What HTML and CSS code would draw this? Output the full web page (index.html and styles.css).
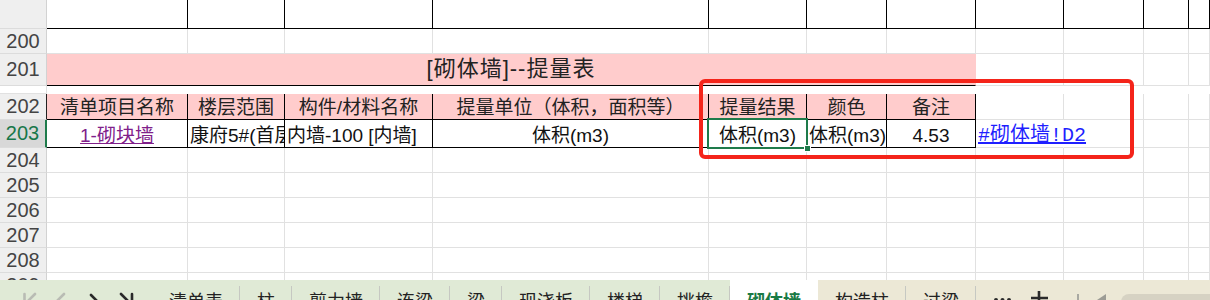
FILE: index.html
```html
<!DOCTYPE html>
<html lang="zh-CN">

<head>
  <meta charset="UTF-8" />
  <title>砌体墙 - 提量表</title>
  <link rel="stylesheet" href="styles.css">
</head>

<body>
  <div class="sheet">
    <!-- 上一张表的最后一行 -->
    <div class="row r-top">
      <div class="rh"></div>
      <div class="c"></div><div class="c"></div><div class="c"></div><div class="c"></div>
      <div class="c"></div><div class="c"></div><div class="c"></div><div class="c"></div>
      <div class="c"></div><div class="c"></div><div class="c"></div>
    </div>
    <div class="row">
      <div class="rh">200</div>
      <div class="c"></div><div class="c"></div><div class="c"></div><div class="c"></div>
      <div class="c"></div><div class="c"></div><div class="c"></div><div class="c"></div>
      <div class="c"></div><div class="c"></div><div class="c"></div>
    </div>
    <!-- 标题 -->
    <div class="row r-title">
      <div class="rh">201</div>
      <div class="c title">[砌体墙]--提量表</div>
      <div class="c"></div><div class="c"></div><div class="c"></div><div class="c"></div><div class="c"></div>
    </div>
    <!-- 表头 -->
    <div class="row r-head">
      <div class="rh">202</div>
      <div class="c hd">清单项目名称</div>
      <div class="c hd">楼层范围</div>
      <div class="c hd">构件/材料名称</div>
      <div class="c hd">提量单位（体积，面积等）</div>
      <div class="c hd">提量结果</div>
      <div class="c hd">颜色</div>
      <div class="c hd">备注</div>
      <div class="c"></div><div class="c"></div><div class="c"></div><div class="c"></div>
    </div>
    <!-- 数据 -->
    <div class="row r-data">
      <div class="rh cur">203</div>
      <div class="c bd center"><span class="visited">1-砌块墙</span></div>
      <div class="c bd">康府5#(首层)</div>
      <div class="c bd">内墙-100 [内墙]</div>
      <div class="c bd center">体积(m3)</div>
      <div class="c bd center act">体积(m3)<span class="selbox"></span><span class="handle"></span></div>
      <div class="c bd">体积(m3)</div>
      <div class="c bd center">4.53</div>
      <div class="c spill"><span class="link">#砌体墙!D2</span></div>
      <div class="c"></div><div class="c"></div><div class="c"></div>
    </div>
    <div class="row">
      <div class="rh">204</div>
      <div class="c"></div><div class="c"></div><div class="c"></div><div class="c"></div>
      <div class="c"></div><div class="c"></div><div class="c"></div><div class="c"></div>
      <div class="c"></div><div class="c"></div><div class="c"></div>
    </div>
    <div class="row">
      <div class="rh">205</div>
      <div class="c"></div><div class="c"></div><div class="c"></div><div class="c"></div>
      <div class="c"></div><div class="c"></div><div class="c"></div><div class="c"></div>
      <div class="c"></div><div class="c"></div><div class="c"></div>
    </div>
    <div class="row">
      <div class="rh">206</div>
      <div class="c"></div><div class="c"></div><div class="c"></div><div class="c"></div>
      <div class="c"></div><div class="c"></div><div class="c"></div><div class="c"></div>
      <div class="c"></div><div class="c"></div><div class="c"></div>
    </div>
    <div class="row">
      <div class="rh">207</div>
      <div class="c"></div><div class="c"></div><div class="c"></div><div class="c"></div>
      <div class="c"></div><div class="c"></div><div class="c"></div><div class="c"></div>
      <div class="c"></div><div class="c"></div><div class="c"></div>
    </div>
    <div class="row">
      <div class="rh">208</div>
      <div class="c"></div><div class="c"></div><div class="c"></div><div class="c"></div>
      <div class="c"></div><div class="c"></div><div class="c"></div><div class="c"></div>
      <div class="c"></div><div class="c"></div><div class="c"></div>
    </div>
    <div class="row">
      <div class="rh">209</div>
      <div class="c"></div><div class="c"></div><div class="c"></div><div class="c"></div>
      <div class="c"></div><div class="c"></div><div class="c"></div><div class="c"></div>
      <div class="c"></div><div class="c"></div><div class="c"></div>
    </div>

    <!-- 标注框 -->
    <div class="annot"></div>
  </div>

  <!-- 工作表标签 -->
  <div class="tabs">
    <div class="nav">
      <svg width="152" height="20" viewBox="0 0 152 20">
        <g fill="none" stroke-width="2.6" stroke-linecap="round" stroke-linejoin="round">
          <path d="M24.5 14v12M35 14l-7 7 7 7" stroke="#b9bcb4" />
          <path d="M64 14l-7 7 7 7" stroke="#b9bcb4" />
          <path d="M91 15l7 7-7 7" stroke="#2a2a2a" />
          <path d="M121 14l7 7-7 7M132 14v12" stroke="#2a2a2a" />
        </g>
      </svg>
    </div>
    <div class="tab">清单表</div>
    <div class="tab">柱</div>
    <div class="tab">剪力墙</div>
    <div class="tab">连梁</div>
    <div class="tab">梁</div>
    <div class="tab">现浇板</div>
    <div class="tab">楼梯</div>
    <div class="tab">挑檐</div>
    <div class="tab active">砌体墙</div>
    <div class="tab after">构造柱</div>
    <div class="tab after">过梁</div>
    <div class="tail">
      <svg width="240" height="20" viewBox="0 0 240 20">
        <circle cx="20" cy="20" r="2" fill="#2a2a2a" />
        <circle cx="26.5" cy="20" r="2" fill="#2a2a2a" />
        <circle cx="33" cy="20" r="2" fill="#2a2a2a" />
        <path d="M63 11v14M55 18h17" stroke="#2a2a2a" stroke-width="2.6" fill="none" />
        <path d="M102 14v10" stroke="#a9a9a2" stroke-width="2" fill="none" />
        <path d="M130 14l-9 6 9 6z" fill="#9c9c95" />
        <rect x="145" y="14" width="120" height="16" rx="8" fill="#d6d2c3" />
      </svg>
    </div>
  </div>
</body>

</html>
```

FILE: styles.css
```css
body {
  margin: 0;
  padding: 0;
  width: 1210px;
  height: 300px;
  overflow: hidden;
  background-color: #fff;
  font-family: "Liberation Sans", "Noto Sans CJK SC", sans-serif;
}

.sheet {
  position: relative;
  height: 280px;
  overflow: hidden;
}

.row {
  display: grid;
  grid-template-columns: 47px 141px 97px 148px 276px 98px 80px 89px 88px 80px 45px 21px;
  height: 25px;
}

.r-top {
  height: 29px;
}

.r-title {
  height: 40px;
}

.r-head {
  height: 26px;
}

.r-data {
  height: 28px;
}

/* 行号 */
.rh {
  display: flex;
  align-items: center;
  justify-content: center;
  box-sizing: border-box;
  background-color: #efefef;
  border-right: 1px solid #d2d2d2;
  border-bottom: 1px solid #dcdcdc;
  color: #444;
  font-size: 20px;
}

.r-head .rh {
  border-right-color: #222;
}

.rh.cur {
  background-color: #d8d8d8;
  color: #17774a;
  border-right: 2px solid #1e7b4b;
}

/* 单元格 */
.c {
  display: flex;
  align-items: flex-end;
  box-sizing: border-box;
  min-width: 0;
  padding: 0 2px;
  border-right: 1px solid #e1e1e1;
  border-bottom: 1px solid #e1e1e1;
  font-size: 19px;
  line-height: 22px;
  color: #111;
  white-space: nowrap;
  overflow: hidden;
}

.r-top .c {
  border-color: #000;
}

.title {
  grid-column: span 7;
  align-items: center;
  justify-content: center;
  background-color: #ffcccc;
  border-right-color: #ffcccc;
  border-bottom-color: #000;
  font-size: 22px;
  letter-spacing: 1px;
  color: #222;
}

.hd {
  justify-content: center;
  background-color: #ffcccc;
  border-color: #000;
  color: #222;
}

.bd {
  border-color: #000;
}

.center {
  justify-content: center;
}

.visited {
  color: #80208a;
  text-decoration: underline;
}

.spill {
  overflow: visible;
  border-right-color: transparent;
}

.link {
  color: #1f1fff;
  text-decoration: underline;
  font-family: "Liberation Mono", "Noto Sans CJK SC", monospace;
  font-size: 20px;
}

/* 选中单元格 */
.act {
  position: relative;
  overflow: visible;
  z-index: 2;
}

.act .selbox {
  position: absolute;
  left: -2px;
  top: -2px;
  right: -2px;
  bottom: -2px;
  border: 2px solid #1e7b4b;
}

.act .handle {
  position: absolute;
  right: -5px;
  bottom: -5px;
  width: 5px;
  height: 5px;
  background-color: #1e7b4b;
  border: 1px solid #fff;
}

/* 红色标注 */
.annot {
  position: absolute;
  left: 699px;
  top: 79px;
  width: 435px;
  height: 80px;
  box-sizing: border-box;
  border: 4px solid #f4241a;
  border-radius: 6px;
  z-index: 3;
}

/* 底部标签栏 */
.tabs {
  display: flex;
  height: 20px;
  overflow: hidden;
  background-color: #ece8d6;
}

.nav {
  flex: none;
  width: 152px;
  background-color: #e0ead6;
}

.nav svg,
.tail svg {
  display: block;
}

.tab {
  flex: none;
  padding: 11px 17px 0;
  font-family: "Noto Sans CJK SC", sans-serif;
  font-size: 18px;
  line-height: 18px;
  color: #222;
  white-space: nowrap;
  background: linear-gradient(#c6c8c2, #c6c8c2) right bottom / 1px 14px no-repeat;
  background-color: #e0ead6;
}

.tab.active {
  background: #fff;
  color: #1a7a45;
  font-weight: bold;
}

.tab.after {
  background-color: #ece8d6;
}

.tail {
  flex: 1;
  overflow: hidden;
}
```
